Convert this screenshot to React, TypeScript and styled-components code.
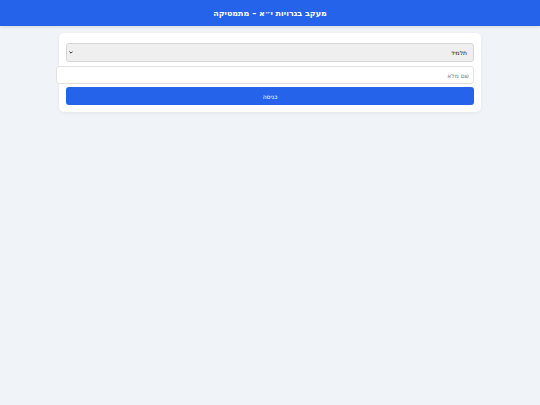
import React from "react";
import styled, { createGlobalStyle } from "styled-components";

const GlobalStyle = createGlobalStyle`
  html, body {
    margin: 0;
    padding: 0;
    background: #f0f4f9;
    font-family: "DejaVu Sans", sans-serif;
  }
  #root {
    min-height: 100vh;
  }
`;

const Page = styled.div`
  direction: rtl;
  min-height: 100vh;
  background: #f0f4f9;
`;

const Header = styled.header`
  height: 26px;
  background: #2563eb;
  color: #fff;
  display: flex;
  align-items: center;
  justify-content: center;
  box-shadow: 0 1px 3px rgba(0, 0, 0, 0.12);
  h1 {
    margin: 0;
    font-size: 8px;
    font-weight: 700;
  }
`;

const chevron =
  "data:image/svg+xml;utf8,<svg xmlns='http://www.w3.org/2000/svg' width='6' height='4' viewBox='0 0 6 4'><path d='M0.6 0.6 L3 3 L5.4 0.6' fill='none' stroke='%23222' stroke-width='1.4'/></svg>";

const Select = styled.select`
  width: 100%;
  height: 19px;
  box-sizing: border-box;
  padding: 0 6px;
  border: 1px solid #d6d6d6;
  border-radius: 3px;
  background: #efefef url("${chevron}") no-repeat 1.5px center;
  background-size: 4px 3px;
  appearance: none;
  color: #111;
  font-family: inherit;
  font-size: 6px;
`;

const Card = styled.main`
  width: 422px;
  box-sizing: border-box;
  margin: 7px auto 0;
  padding: 10px 7px 7px;
  background: #fff;
  border-radius: 5px;
  box-shadow: 0 1px 4px rgba(0, 0, 0, 0.06);
  display: flex;
  flex-direction: column;
`;

const Input = styled.input`
  width: 100%;
  height: 16px;
  margin-top: 4px;
  box-sizing: content-box;
  padding: 0 4px;
  border: 1px solid #e2e2e2;
  border-radius: 3px;
  background: #fff;
  font-family: inherit;
  font-size: 6px;
  outline: none;
  &::placeholder {
    color: #777;
  }
`;

const Button = styled.button`
  height: 18px;
  margin-top: 3px;
  border: none;
  border-radius: 3px;
  background: #2563eb;
  color: #fff;
  font-family: inherit;
  font-size: 6px;
  cursor: pointer;
`;

export default function App() {
  return (
    <Page>
      <GlobalStyle />
      <Header>
        <h1>מעקב בגרויות י״א – מתמטיקה</h1>
      </Header>
      <Card>
        <Select defaultValue="student">
          <option value="student">תלמיד</option>
          <option value="teacher">מורה</option>
        </Select>
        <Input type="text" placeholder="שם מלא" />
        <Button>כניסה</Button>
      </Card>
    </Page>
  );
}
